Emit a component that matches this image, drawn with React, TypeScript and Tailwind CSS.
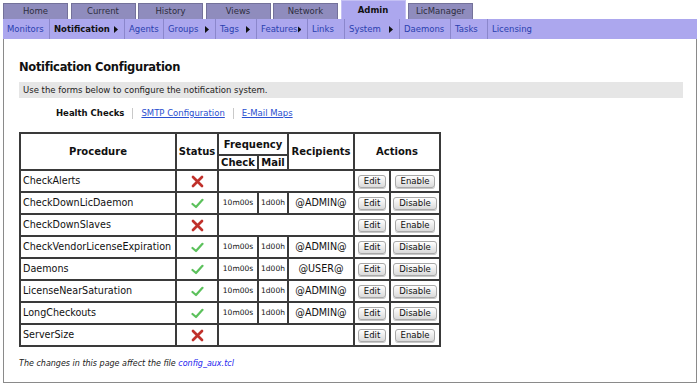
import React from 'react';

const tabs = ['Home', 'Current', 'History', 'Views', 'Network', 'Admin', 'LicManager'];

const subNav = [
  { label: 'Monitors', w: 'w-[47px]' },
  { label: 'Notification', w: 'w-[75px]', arrow: true, active: true },
  { label: 'Agents', w: 'w-[39px]' },
  { label: 'Groups', w: 'w-[52px]', arrow: true },
  { label: 'Tags', w: 'w-[41px]', arrow: true },
  { label: 'Features', w: 'w-[51px]', arrow: true },
  { label: 'Links', w: 'w-[37px]' },
  { label: 'System', w: 'w-[55px]', arrow: true },
  { label: 'Daemons', w: 'w-[51px]' },
  { label: 'Tasks', w: 'w-[37px]' },
  { label: 'Licensing', w: 'w-[50px]', last: true },
];

const rows = [
  { name: 'CheckAlerts', ok: false },
  { name: 'CheckDownLicDaemon', ok: true, to: '@ADMIN@' },
  { name: 'CheckDownSlaves', ok: false },
  { name: 'CheckVendorLicenseExpiration', ok: true, to: '@ADMIN@' },
  { name: 'Daemons', ok: true, to: '@USER@' },
  { name: 'LicenseNearSaturation', ok: true, to: '@ADMIN@' },
  { name: 'LongCheckouts', ok: true, to: '@ADMIN@' },
  { name: 'ServerSize', ok: false },
];

function Arrow() {
  return (
    <svg width="4" height="7" viewBox="0 0 4 7">
      <path d="M0 0 L4 3.5 L0 7 Z" fill="#111" />
    </svg>
  );
}

function Cross() {
  return (
    <svg width="13" height="13" viewBox="0 0 13 13" className="mx-auto">
      <path d="M2 2 L11 11 M11 2 L2 11" stroke="#c0312b" strokeWidth="2.7" strokeLinecap="round" />
    </svg>
  );
}

function Check() {
  return (
    <svg width="13" height="11" viewBox="0 0 13 11" className="mx-auto">
      <path d="M1.5 6 L5 9 L11.5 1.8" stroke="#5cc15c" strokeWidth="2.2" fill="none" strokeLinecap="round" strokeLinejoin="round" />
    </svg>
  );
}

function Btn({ children }: { children: React.ReactNode }) {
  return (
    <span className="inline-flex items-center justify-center h-[13px] px-[5px] text-[8.5px] leading-none text-[#111] border border-[#a9a9a9] rounded-[3px] bg-linear-to-b from-white to-[#dadada] shadow-[0_1px_0_#c8c8c8]">
      {children}
    </span>
  );
}

const cell = 'border-2 border-[#3a3a3a]';

export default function App() {
  return (
    <div className="w-[700px] h-[388px] bg-white overflow-hidden text-[#222]" style={{ fontFamily: '"DejaVu Sans", Verdana, sans-serif' }}>
      {/* top tabs */}
      <div className="h-[19px] flex items-end pl-[3px] gap-[2.5px]">
        {tabs.map((t) =>
          t === 'Admin' ? (
            <div key={t} className="w-[65px] h-[19px] bg-[#aca7ee] border-l border-t border-r border-[#c4c0f4] text-[8.5px] font-bold text-[#111] flex items-center justify-center pt-[1px]">
              {t}
            </div>
          ) : (
            <div key={t} className="w-[65px] h-[16px] bg-[#8f8cbd] border-l border-t border-r border-[#74729a] text-[8.5px] text-[#2e2e40] flex items-center justify-center">
              {t}
            </div>
          )
        )}
      </div>

      {/* sub nav */}
      <div className="mx-[3px] h-[20px] bg-[#aca7ee] flex items-stretch">
        {subNav.map((s) => (
          <div
            key={s.label}
            className={`${s.w} flex items-center justify-between pl-[4px] pr-[6px] text-[8.5px] ${s.last ? '' : 'border-r border-[#8b87cc]'} ${s.active ? 'font-bold text-[#111]' : 'text-[#2a3fae]'}`}
          >
            <span>{s.label}</span>
            {s.arrow && <Arrow />}
          </div>
        ))}
      </div>

      {/* content */}
      <div className="mx-[3px] h-[344px] border-l border-r border-b border-[#8a8a8a] pl-[15px] pr-[13px]">
        <h1 className="pt-[20px] text-[11.5px] font-bold tracking-[-0.3px] text-[#111] leading-[16px]">
          Notification Configuration
        </h1>
        <div className="mt-[7px] h-[16px] bg-[#e6e6e6] flex items-center pl-[4px] text-[8.5px] text-[#222]">
          Use the forms below to configure the notification system.
        </div>
        <div className="mt-[8px] h-[14px] flex items-center text-[8.5px] pl-[37px]">
          <span className="font-bold text-[#111]">Health Checks</span>
          <span className="mx-[8px] h-[11px] border-l border-[#c9c9c9]" />
          <span className="text-[#2a4fd0] underline">SMTP Configuration</span>
          <span className="mx-[8px] h-[11px] border-l border-[#c9c9c9]" />
          <span className="text-[#2a4fd0] underline">E-Mail Maps</span>
        </div>

        <table className="mt-[12px] w-[420px] table-fixed border-collapse border-2 border-[#3a3a3a] text-[9.6px] text-[#111]">
          <colgroup>
            <col className="w-[156px]" />
            <col className="w-[42px]" />
            <col className="w-[40px]" />
            <col className="w-[30px]" />
            <col className="w-[66px]" />
            <col className="w-[36px]" />
            <col className="w-[50px]" />
          </colgroup>
          <thead className="text-[10px] font-bold">
            <tr className="h-[22px]">
              <th rowSpan={2} className={cell}>Procedure</th>
              <th rowSpan={2} className={cell}>Status</th>
              <th colSpan={2} className={cell}>Frequency</th>
              <th rowSpan={2} className={cell}>Recipients</th>
              <th rowSpan={2} colSpan={2} className={cell}>Actions</th>
            </tr>
            <tr className="h-[15px]">
              <th className={`${cell} leading-[11px]`}>Check</th>
              <th className={`${cell} leading-[11px]`}>Mail</th>
            </tr>
          </thead>
          <tbody>
            {rows.map((r) => (
              <tr key={r.name} className="h-[22px]">
                <td className={`${cell} pl-[2px] whitespace-nowrap`}>{r.name}</td>
                <td className={cell}>{r.ok ? <Check /> : <Cross />}</td>
                {r.ok ? (
                  <>
                    <td className={`${cell} text-center text-[7.5px]`}>10m00s</td>
                    <td className={`${cell} text-center text-[7.5px]`}>1d00h</td>
                    <td className={`${cell} text-center`}>{r.to}</td>
                  </>
                ) : (
                  <td colSpan={3} className={cell} />
                )}
                <td className={`${cell} text-center`}><Btn>Edit</Btn></td>
                <td className={`${cell} text-center`}><Btn>{r.ok ? 'Disable' : 'Enable'}</Btn></td>
              </tr>
            ))}
          </tbody>
        </table>

        <p className="mt-[11px] text-[8px] italic text-[#222]">
          The changes in this page affect the file <span className="text-[#2222ee]">config_aux.tcl</span>
        </p>
      </div>
    </div>
  );
}
